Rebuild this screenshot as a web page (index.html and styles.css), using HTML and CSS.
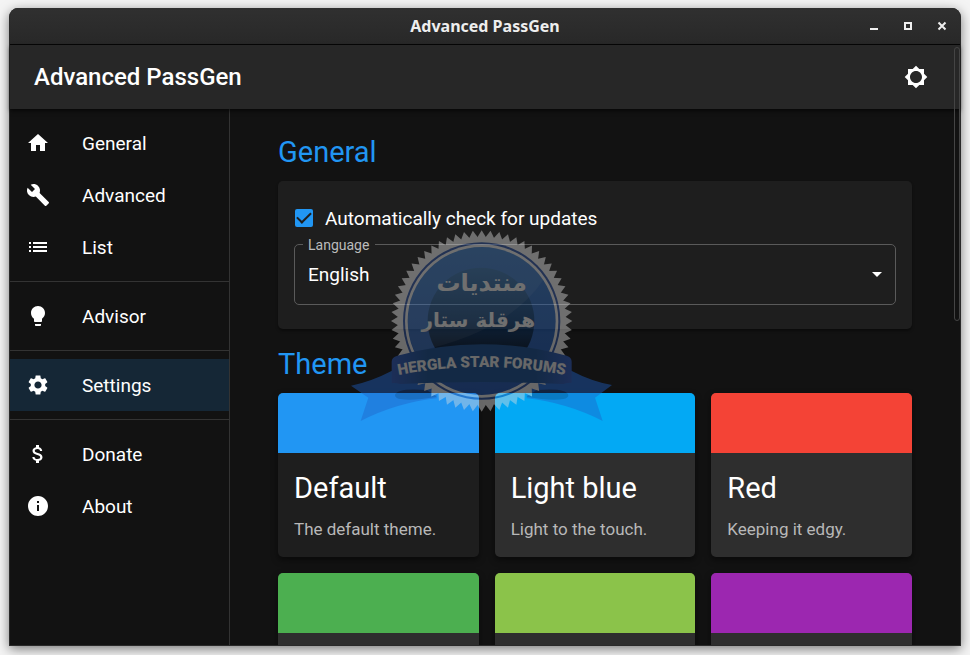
FILE: index.html
```html
<!DOCTYPE html>
<html lang="en">
<head>
    <meta charset="utf-8">
    <title>Advanced PassGen</title>
    <link rel="stylesheet" href="styles.css">
</head>
<body>
    <div class="window">
        <div class="titlebar">
            <div class="window-title">Advanced PassGen</div>
            <div class="window-buttons">
                <button aria-label="Minimize"><svg width="10" height="10" viewBox="0 0 10 10"><path d="M1 7h8v2H1z"/></svg></button>
                <button aria-label="Maximize"><svg width="10" height="10" viewBox="0 0 10 10"><path fill-rule="evenodd" d="M1 1h8v8H1zM3 3v4h4V3z"/></svg></button>
                <button aria-label="Close"><svg width="10" height="10" viewBox="0 0 10 10"><path d="M1.500 1.500l7 7M8.500 1.500l-7 7" stroke="#eee" stroke-width="2"/></svg></button>
            </div>
        </div>

        <div class="app">
            <header class="appbar">
                <h1>Advanced PassGen</h1>
                <button class="icon-button" aria-label="Change mode">
                    <svg width="24" height="24" viewBox="0 0 24 24"><path d="M20 15.310L23.310 12 20 8.690V4h-4.690L12 .690 8.690 4H4v4.690L.690 12 4 15.310V20h4.690L12 23.310 15.310 20H20v-4.690zM12 18c-3.310 0-6-2.690-6-6s2.690-6 6-6 6 2.690 6 6-2.690 6-6 6z"/></svg>
                </button>
            </header>

            <div class="content">
                <nav class="sidebar">
                    <div class="nav-group">
                        <a href="#general"><svg width="24" height="24" viewBox="0 0 24 24"><path d="M10 20v-6h4v6h5v-8h3L12 3 2 12h3v8z"/></svg>General</a>
                        <a href="#advanced"><svg width="24" height="24" viewBox="0 0 24 24"><path d="M22.700 19l-9.100-9.100c.9-2.300.4-5-1.500-6.900-2-2-5-2.400-7.400-1.300L9 6 6 9 1.600 4.700C.4 7.100.9 10.100 2.900 12.100c1.900 1.900 4.600 2.400 6.900 1.500l9.100 9.100c.4.4 1 .4 1.400 0l2.300-2.300c.5-.4.5-1.100.1-1.400z"/></svg>Advanced</a>
                        <a href="#list"><svg width="24" height="24" viewBox="0 0 24 24"><path d="M3 13h2v-2H3v2zm0 4h2v-2H3v2zm0-8h2V7H3v2zm4 4h14v-2H7v2zm0 4h14v-2H7v2zM7 7v2h14V7H7z"/></svg>List</a>
                    </div>
                    <div class="nav-group">
                        <a href="#advisor"><svg width="24" height="24" viewBox="0 0 24 24"><path d="M9 21c0 .5.4 1 1 1h4c.6 0 1-.5 1-1v-1H9v1zm3-19C8.100 2 5 5.100 5 9c0 2.400 1.200 4.500 3 5.700V17c0 .5.4 1 1 1h6c.6 0 1-.5 1-1v-2.300c1.800-1.300 3-3.400 3-5.700 0-3.900-3.100-7-7-7z"/></svg>Advisor</a>
                    </div>
                    <div class="nav-group">
                        <a href="#settings" class="selected"><svg width="24" height="24" viewBox="0 0 24 24"><path d="M19.140 12.940c.04-.3.06-.61.06-.94 0-.32-.02-.64-.07-.94l2.030-1.580c.18-.14.23-.41.12-.61l-1.920-3.320c-.12-.22-.37-.29-.59-.22l-2.390.96c-.5-.38-1.030-.7-1.620-.94l-.36-2.540c-.04-.24-.24-.41-.48-.41h-3.840c-.24 0-.43.17-.47.41l-.36 2.540c-.59.24-1.130.57-1.620.94l-2.390-.96c-.22-.08-.47 0-.59.22L2.740 8.870c-.12.21-.08.47.12.61l2.030 1.580c-.05.3-.09.63-.09.94s.02.64.07.94l-2.030 1.580c-.18.14-.23.41-.12.61l1.920 3.320c.12.22.37.29.59.22l2.390-.96c.5.38 1.030.7 1.620.94l.36 2.540c.05.24.24.41.48.41h3.840c.24 0 .44-.17.47-.41l.36-2.540c.59-.24 1.130-.56 1.620-.94l2.390.96c.22.08.47 0 .59-.22l1.920-3.320c.12-.22.07-.47-.12-.61l-2.010-1.580zM12 15.600c-1.980 0-3.600-1.620-3.600-3.600s1.620-3.600 3.600-3.600 3.600 1.620 3.600 3.600-1.620 3.600-3.600 3.600z"/></svg>Settings</a>
                    </div>
                    <div class="nav-group">
                        <a href="#donate"><svg width="24" height="24" viewBox="0 0 24 24"><path d="M11.800 10.900c-2.270-.59-3-1.200-3-2.150 0-1.090 1.010-1.850 2.700-1.850 1.780 0 2.440.85 2.500 2.100h2.210c-.07-1.720-1.120-3.300-3.210-3.810V3h-3v2.160c-1.940.42-3.500 1.680-3.500 3.610 0 2.310 1.910 3.460 4.700 4.130 2.500.6 3 1.480 3 2.410 0 .69-.49 1.790-2.700 1.790-2.060 0-2.870-.92-2.980-2.100h-2.200c.12 2.190 1.760 3.420 3.680 3.830V21h3v-2.150c1.950-.37 3.500-1.500 3.500-3.550 0-2.840-2.430-3.810-4.700-4.400z"/></svg>Donate</a>
                        <a href="#about"><svg width="24" height="24" viewBox="0 0 24 24"><path d="M12 2C6.480 2 2 6.480 2 12s4.480 10 10 10 10-4.480 10-10S17.520 2 12 2zm1 15h-2v-6h2v6zm0-8h-2V7h2v2z"/></svg>About</a>
                    </div>
                </nav>

                <main>
                    <h2>General</h2>
                    <section class="panel">
                        <label class="check">
                            <input type="checkbox" checked>
                            Automatically check for updates
                        </label>
                        <div class="field">
                            <label for="language">Language</label>
                            <select id="language">
                                <option>English</option>
                            </select>
                            <svg class="arrow" width="24" height="24" viewBox="0 0 24 24"><path d="M7 10l5 5 5-5z"/></svg>
                        </div>
                    </section>

                    <h2>Theme</h2>
                    <section class="themes">
                        <button class="theme" disabled>
                            <span class="swatch blue"></span>
                            <span class="name">Default</span>
                            <span class="info">The default theme.</span>
                        </button>
                        <button class="theme">
                            <span class="swatch lightblue"></span>
                            <span class="name">Light blue</span>
                            <span class="info">Light to the touch.</span>
                        </button>
                        <button class="theme">
                            <span class="swatch red"></span>
                            <span class="name">Red</span>
                            <span class="info">Keeping it edgy.</span>
                        </button>
                        <button class="theme"><span class="swatch green"></span></button>
                        <button class="theme"><span class="swatch lime"></span></button>
                        <button class="theme"><span class="swatch purple"></span></button>
                    </section>
                </main>
            </div>
            <div class="scrollbar"></div>
        </div>

        <!-- forum stamp -->
        <svg class="stamp" width="290" height="210" viewBox="0 0 870 630">
            <defs>
                <linearGradient id="disc" x1="0" y1="0" x2="0" y2="1">
                    <stop offset="0" stop-color="#2c6cb8"/>
                    <stop offset="1" stop-color="#1d4fa8"/>
                </linearGradient>
                <linearGradient id="core" x1="0" y1="0" x2="0" y2="1">
                    <stop offset="0" stop-color="#25629f"/>
                    <stop offset="0.500" stop-color="#0b3a70"/>
                    <stop offset="0.800" stop-color="#001028"/>
                </linearGradient>
                <linearGradient id="band" x1="0" y1="0" x2="1" y2="0">
                    <stop offset="0" stop-color="#2c56b8"/>
                    <stop offset="0.200" stop-color="#164a8c"/>
                    <stop offset="0.800" stop-color="#164a8c"/>
                    <stop offset="1" stop-color="#2c56b8"/>
                </linearGradient>
                <!-- one tooth doubled up to 64 -->
                <path id="t1" d="M409 57L425 31 441 57z"/>
                <g id="t2"><use href="#t1"/><use href="#t1" transform="rotate(5.625 425 303)"/></g>
                <g id="t4"><use href="#t2"/><use href="#t2" transform="rotate(11.250 425 303)"/></g>
                <g id="t8"><use href="#t4"/><use href="#t4" transform="rotate(22.500 425 303)"/></g>
                <g id="t16"><use href="#t8"/><use href="#t8" transform="rotate(45 425 303)"/></g>
                <g id="t32"><use href="#t16"/><use href="#t16" transform="rotate(90 425 303)"/></g>
                <path id="curve" d="M150 470Q425 412 700 470"/>
            </defs>
            <g opacity="0.420">
                <path fill="#1f62c8" d="M33 497Q95 484 156 452L290 490V535Q170 548 62 603L85 533z"/>
                <path fill="#1f62c8" d="M816 495Q755 484 694 452L560 490V535Q680 548 788 603L765 533z"/>
                <path fill="#123a80" d="M165 525Q170 503 260 510L290 530Q220 543 180 537Q165 534 165 525zM685 525Q680 503 590 510L560 530Q630 543 670 537Q685 534 685 525z"/>
                <g fill="#e0e0e0">
                    <circle cx="425" cy="303" r="250"/>
                    <use href="#t32"/>
                    <use href="#t32" transform="rotate(180 425 303)"/>
                </g>
                <circle cx="425" cy="303" r="236" fill="#2a4f9c"/>
                <circle cx="425" cy="303" r="230" fill="#e0e0e0"/>
                <circle cx="425" cy="303" r="222" fill="url(#disc)"/>
                <circle cx="423" cy="303" r="160" fill="url(#core)"/>
                <path fill="#fff" opacity="0.080" d="M205 330A222 222 0 0 1 610 180Q500 340 225 395A222 222 0 0 1 205 330z"/>
                <path fill="url(#band)" d="M155 425Q155 412 172 407Q425 338 680 407Q695 412 695 425V488Q680 488 670 492Q425 480 180 492Q165 488 155 490z"/>
                <g fill="#e0e0e0">
                    <text class="stamp-ar" x="425" y="214" text-anchor="middle" lang="ar">منتديات</text>
                    <text class="stamp-ar small" x="415" y="322" text-anchor="middle" lang="ar">هرقلة ستار</text>
                    <text class="stamp-en" text-anchor="middle"><textPath href="#curve" startOffset="50%">HERGLA STAR FORUMS</textPath></text>
                </g>
            </g>
        </svg>
    </div>
</body>
</html>
```
FILE: styles.css
```css
* {
    box-sizing: border-box;
}

body {
    margin: 0;
    height: 100vh;
    padding: 8px 9px 9px;
    background: #f4f4f4;
    font-family: Roboto, "Liberation Sans", sans-serif;
    font-size: 19px;
    color: #fff;
    overflow: hidden;
}

svg {
    fill: currentColor;
    flex: none;
}

button {
    font: inherit;
    color: inherit;
    border: 0;
    padding: 0;
    background: none;
    cursor: pointer;
}

.window {
    position: relative;
    display: flex;
    flex-direction: column;
    height: 100%;
    border: 1px solid #2a2a2a;
    border-top: 0;
    border-radius: 9px 9px 0 0;
    background: #121212;
    box-shadow: 0 3px 12px rgba(0, 0, 0, 0.5);
}

.titlebar {
    display: grid;
    grid-template-columns: 1fr auto 1fr;
    align-items: center;
    height: 37px;
    flex: none;
    background: linear-gradient(#303030, #282828);
    border-bottom: 1px solid #060606;
    border-radius: 8px 8px 0 0;
}

.window-title {
    grid-column: 2;
    font-family: "Noto Sans", sans-serif;
    font-size: 16px;
    font-weight: bold;
    color: #eee;
}

.window-buttons {
    display: flex;
    justify-content: flex-end;
    gap: 10px;
    padding-right: 6px;
    color: #eee;
}

.window-buttons button {
    display: flex;
    justify-content: center;
    width: 24px;
}

.app {
    position: relative;
    display: flex;
    flex-direction: column;
    flex: 1;
    min-height: 0;
}

.appbar {
    display: flex;
    align-items: center;
    justify-content: space-between;
    height: 64px;
    flex: none;
    padding: 0 32px 0 24px;
    background: #272727;
    box-shadow: 0 2px 4px rgba(0, 0, 0, 0.6);
    z-index: 1;
}

h1 {
    margin: 0;
    font-size: 24px;
    font-weight: 500;
}

.icon-button {
    display: flex;
}

.content {
    display: flex;
    flex: 1;
    min-height: 0;
}

.sidebar {
    width: 220px;
    flex: none;
    border-right: 1px solid #333;
}

.nav-group {
    padding: 8px 0;
}

.nav-group + .nav-group {
    border-top: 1px solid #333;
}

.nav-group a {
    display: flex;
    align-items: center;
    gap: 32px;
    height: 52px;
    padding: 0 16px;
    color: #fff;
    text-decoration: none;
}

.nav-group a.selected {
    background: #152736;
}

main {
    flex: 1;
    min-width: 0;
    padding: 26px 48px 0;
    overflow: hidden;
}

h2 {
    margin: 0 0 11px;
    font-size: 29px;
    line-height: 35px;
    font-weight: 400;
    color: #2196f3;
}

.panel {
    margin-bottom: 18px;
    padding: 16px 16px 24px;
    background: #1e1e1e;
    border-radius: 5px;
    box-shadow: 0 2px 3px rgba(0, 0, 0, 0.4);
}

.check {
    display: flex;
    align-items: center;
    gap: 12px;
    height: 42px;
    margin-bottom: 5px;
}

.check input {
    appearance: none;
    width: 18px;
    height: 18px;
    margin: 0 0 0 1px;
    border-radius: 2px;
    background: #2196f3;
    display: grid;
    place-items: center;
}

.check input::after {
    content: "";
    width: 6px;
    height: 12px;
    margin-bottom: 4px;
    border: solid #1e1e1e;
    border-width: 0 2px 2px 0;
    transform: rotate(45deg);
}

.field {
    position: relative;
}

.field label {
    position: absolute;
    top: -8px;
    left: 9px;
    padding: 0 6px 0 5px;
    font-size: 14px;
    line-height: 18px;
    color: #bbb;
    background: #1e1e1e;
}

.field select {
    display: block;
    appearance: none;
    width: 100%;
    height: 61px;
    padding: 0 13px;
    font: inherit;
    color: #fff;
    background: none;
    border: 1px solid #5a5a5a;
    border-radius: 5px;
}

.field .arrow {
    position: absolute;
    right: 7px;
    top: 18px;
    pointer-events: none;
}

.themes {
    display: grid;
    grid-template-columns: repeat(3, 1fr);
    gap: 16px;
}

.theme {
    display: flex;
    flex-direction: column;
    min-height: 164px;
    text-align: left;
    background: #2e2e2e;
    border-radius: 5px;
    overflow: hidden;
    box-shadow: 0 3px 6px rgba(0, 0, 0, 0.5);
}

.theme:disabled {
    color: #fff;
    background: #1e1e1e;
    cursor: default;
}

.swatch {
    width: 100%;
    height: 60px;
}

.name {
    padding: 16px 16px 0;
    font-size: 29px;
    line-height: 38px;
}

.info {
    padding: 10px 16px 0;
    font-size: 17px;
    line-height: 24px;
    color: #b8b8b8;
}

.blue { background: #2196f3; }
.lightblue { background: #03a9f4; }
.red { background: #f44336; }
.green { background: #4caf50; }
.lime { background: #8bc34a; }
.purple { background: #9c27b0; }

.scrollbar {
    position: absolute;
    top: 2px;
    right: 0;
    width: 6px;
    height: 274px;
    border: 1px solid #444;
    border-radius: 3px;
    z-index: 2;
}

.stamp {
    position: absolute;
    top: 212px;
    left: 330px;
    z-index: 3;
    pointer-events: none;
}

.stamp-ar {
    font-family: "DejaVu Sans", sans-serif;
    font-size: 72px;
    font-weight: bold;
}

.stamp-ar.small {
    font-size: 60px;
}

.stamp-en {
    font-family: Roboto, sans-serif;
    font-size: 46px;
    font-weight: 900;
}
```
